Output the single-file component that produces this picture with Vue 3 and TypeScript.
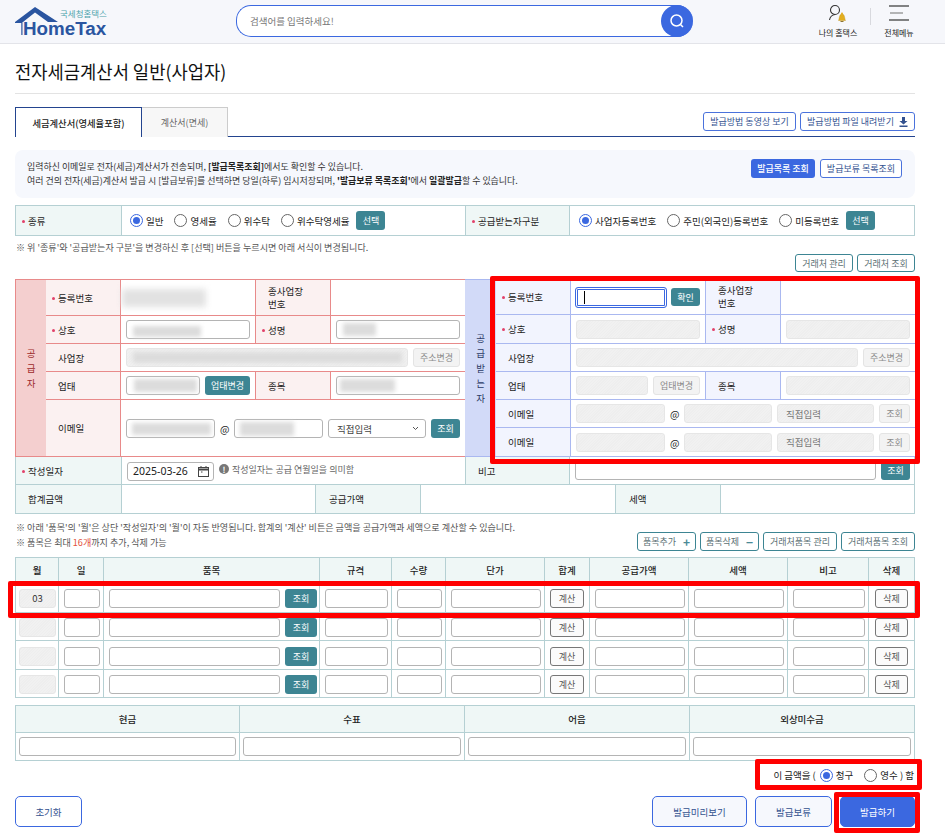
<script setup lang="ts">
const typeOpts = ['일반', '영세율', '위수탁', '위수탁영세율']
const recvOpts = ['사업자등록번호', '주민(외국인)등록번호', '미등록번호']
const itemHeads = ['월', '일', '품목', '규격', '수량', '단가', '합계', '공급가액', '세액', '비고', '삭제']
const itemRows = [
  { id: 1, month: '03', cls: 'h31' },
  { id: 2, month: '', cls: 'h28' },
  { id: 3, month: '', cls: 'h29' },
  { id: 4, month: '', cls: 'h28' },
]
const payHeads = ['현금', '수표', '어음', '외상미수금']
const supplierChars = ['공', '급', '자']
const receiverChars = ['공', '급', '받', '는', '자']
const emails = [1, 2]
</script>

<template>
  <div class="page">
    <header class="top">
      <svg class="logo" width="100" height="36" viewBox="0 0 100 36">
        <path d="M0 17 L20 2 L43 17 L33 17 L20 7.500 L8 17 L7.500 17 L7.500 30 L6.300 30 L6.300 18 L0 18 Z" fill="#2a55a0" />
        <text x="8" y="30" class="logo-main">HomeTax</text>
        <text x="45" y="12" class="logo-sub">국세청홈택스</text>
      </svg>
      <div class="search">
        <span class="search-ph">검색어를 입력하세요!</span>
        <span class="search-btn">
          <svg width="16" height="16" viewBox="0 0 16 16" fill="none" stroke="#fff" stroke-width="1.500">
            <circle cx="7.500" cy="7.500" r="5.500" />
            <path d="M11.500 11.500 L14 14" />
          </svg>
        </span>
      </div>
      <div class="top-actions">
        <div class="top-link">
          <svg width="20" height="18" viewBox="0 0 20 18" fill="none">
            <circle cx="7" cy="6" r="4.500" stroke="#333" stroke-width="1.100" />
            <path d="M1.500 16 C2 13 4 11 7 10.500" stroke="#333" stroke-width="1.100" />
            <path d="M10.500 16.500 C11.500 15 11 10 14 10 C17 10 16.500 15 17.500 16.500 Z" fill="#e3ae1e" stroke="#b98d18" stroke-width="0.400" />
            <circle cx="14" cy="9.500" r="1" fill="#e3ae1e" />
            <path d="M12.500 17.500 H15.500" stroke="#8a7436" />
          </svg>
          <span>나의 홈택스</span>
        </div>
        <i class="top-sep"></i>
        <div class="top-link menu">
          <svg width="20" height="18" viewBox="0 0 20 18" stroke-width="1.200">
            <path d="M0 2 H20" stroke="#333" />
            <path d="M1 9 H14" stroke="#888" />
            <path d="M0 16 H20" stroke="#333" />
          </svg>
          <span>전체메뉴</span>
        </div>
      </div>
    </header>

    <main class="main">
      <h1 class="title">전자세금계산서 일반(사업자)</h1>

      <div class="tabs">
        <div class="tab on">세금계산서(영세율포함)</div>
        <div class="tab">계산서(면세)</div>
        <div class="tab-tools">
          <button class="btn outline-blue w93">발급방법 동영상 보기</button>
          <button class="btn outline-blue w115">
            발급방법 파일 내려받기
            <svg width="9" height="10" viewBox="0 0 9 10" fill="#33518f"><path d="M3 0 H6 V4 H8.500 L4.500 7.500 L0.500 4 H3 Z M0.500 8.500 H8.500 V10 H0.500 Z" /></svg>
          </button>
        </div>
      </div>

      <section class="info">
        <div class="info-text">
          <p>입력하신 이메일로 전자(세금)계산서가 전송되며, <b>[발급목록조회]</b>에서도 확인할 수 있습니다.</p>
          <p>여러 건의 전자(세금)계산서 발급 시 [발급보류]를 선택하면 당일(하루) 임시저장되며, <b>'발급보류 목록조회'</b>에서 <b>일괄발급</b>할 수 있습니다.</p>
        </div>
        <button class="btn solid-blue w64">발급목록 조회</button>
        <button class="btn outline-blue w82">발급보류 목록조회</button>
      </section>

      <section class="type-row">
        <div class="g-label req w106">종류</div>
        <div class="type-cell left">
          <label v-for="(o, i) in typeOpts" :key="o" class="radio-item">
            <i class="radio" :class="{ on: i === 0 }"></i>{{ o }}
          </label>
          <button class="btn teal w29 sel">선택</button>
        </div>
        <div class="g-label req w105">공급받는자구분</div>
        <div class="type-cell right">
          <label v-for="(o, i) in recvOpts" :key="o" class="radio-item">
            <i class="radio" :class="{ on: i === 0 }"></i>{{ o }}
          </label>
          <button class="btn teal w29 sel">선택</button>
        </div>
      </section>

      <p class="note first">※ 위 '종류'와 '공급받는자 구분'을 변경하신 후 [선택] 버튼을 누르시면 아래 서식이 변경됩니다.</p>
      <div class="partner-tools">
        <button class="btn outline-teal w58">거래처 관리</button>
        <button class="btn outline-teal w58">거래처 조회</button>
      </div>

      <section class="parties">
        <div class="party sup">
          <div class="side"><span v-for="c in supplierChars" :key="c">{{ c }}</span></div>
          <div class="lb req">등록번호</div>
          <div class="cl flush"><i class="redact r-reg"></i></div>
          <div class="lb two">종사업장<br />번호</div>
          <div class="cl end"></div>

          <div class="lb req">상호</div>
          <div class="cl"><div class="field grow"><i class="redact r-corp"></i></div></div>
          <div class="lb req">성명</div>
          <div class="cl end"><div class="field grow"><i class="redact r-name"></i></div></div>

          <div class="lb">사업장</div>
          <div class="cl span3">
            <div class="field grow off"><i class="redact r-addr"></i></div>
            <button class="btn dis w47">주소변경</button>
          </div>

          <div class="lb">업태</div>
          <div class="cl">
            <div class="field grow"><i class="redact r-biz"></i></div>
            <button class="btn teal w45">업태변경</button>
          </div>
          <div class="lb">종목</div>
          <div class="cl end"><div class="field grow"><i class="redact r-item"></i></div></div>

          <div class="lb">이메일</div>
          <div class="cl span3 mail-s">
            <div class="field w89"><i class="redact r-mail"></i></div>
            <span class="at">@</span>
            <div class="field w89"><i class="redact r-domain"></i></div>
            <div class="field select w98">
              직접입력
              <svg width="7" height="5" viewBox="0 0 7 5" fill="none" stroke="#555"><path d="M1 1 L3.500 3.500 L6 1" /></svg>
            </div>
            <button class="btn teal w29 h19">조회</button>
          </div>
        </div>

        <div class="party rec">
          <div class="side"><span v-for="c in receiverChars" :key="c">{{ c }}</span></div>
          <div class="lb req">등록번호</div>
          <div class="cl"><div class="field focus w92"><i class="caret"></i></div><button class="btn teal w29 confirm">확인</button></div>
          <div class="lb two">종사업장<br />번호</div>
          <div class="cl end"></div>

          <div class="lb req">상호</div>
          <div class="cl"><div class="field grow off"></div></div>
          <div class="lb req">성명</div>
          <div class="cl end"><div class="field grow off"></div></div>

          <div class="lb">사업장</div>
          <div class="cl span3">
            <div class="field grow off"></div>
            <button class="btn dis w47">주소변경</button>
          </div>

          <div class="lb">업태</div>
          <div class="cl">
            <div class="field grow off"></div>
            <button class="btn dis w47">업태변경</button>
          </div>
          <div class="lb">종목</div>
          <div class="cl end"><div class="field grow off"></div></div>

          <template v-for="e in emails" :key="e">
            <div class="lb">이메일</div>
            <div class="cl span3">
              <div class="field off w89"></div>
              <span class="at">@</span>
              <div class="field off w88"></div>
              <div class="field off select w97">직접입력</div>
              <button class="btn dis w31">조회</button>
            </div>
          </template>
        </div>
      </section>

      <section class="date-row">
        <div class="g-label req w106">작성일자</div>
        <div class="date-cell">
          <div class="field date">
            2025-03-26
            <svg width="11" height="11" viewBox="0 0 11 11" fill="none" stroke="#444"><rect x="0.500" y="1.500" width="10" height="9" /><path d="M0 3.500 H11" stroke-width="2" /><path d="M3 0 V2 M8 0 V2" /><path d="M3 6 H4.500" /></svg>
          </div>
          <i class="info-dot">!</i>
          <span class="hint">작성일자는 공급 연월일을 의미함</span>
        </div>
        <div class="g-label w105">비고</div>
        <div class="memo-cell">
          <input class="input grow" />
          <button class="btn teal w29 h19">조회</button>
        </div>
      </section>

      <section class="sum-row">
        <div class="g-label w106">합계금액</div>
        <div class="sum-val a"></div>
        <div class="g-label b">공급가액</div>
        <div class="sum-val c"></div>
        <div class="g-label d">세액</div>
        <div class="sum-val e"></div>
      </section>

      <section class="item-notes">
        <div>
          <p class="note">※ 아래 '품목'의 '월'은 상단 '작성일자'의 '월'이 자동 반영됩니다. 합계의 '계산' 비튼은 금액을 공급가액과 세액으로 계산할 수 있습니다.</p>
          <p class="note">※ 품목은 최대 <em>16개</em>까지 추가, 삭제 가능</p>
        </div>
        <div class="item-tools">
          <button class="btn outline-teal w59">품목추가<span class="pm">+</span></button>
          <button class="btn outline-teal w59">품목삭제<span class="pm">−</span></button>
          <button class="btn outline-teal w74">거래처품목 관리</button>
          <button class="btn outline-teal w74">거래처품목 조회</button>
        </div>
      </section>

      <section class="items">
        <div v-for="h in itemHeads" :key="h" class="ih">{{ h }}</div>
        <template v-for="r in itemRows" :key="r.id">
          <div class="ic mo" :class="r.cls"><div class="field grow off month">{{ r.month }}</div></div>
          <div class="ic" :class="r.cls"><input class="input grow" /></div>
          <div class="ic gap5" :class="r.cls"><input class="input grow" /><button class="btn teal w32">조회</button></div>
          <div class="ic" :class="r.cls"><input class="input grow" /></div>
          <div class="ic" :class="r.cls"><input class="input grow" /></div>
          <div class="ic" :class="r.cls"><input class="input grow" /></div>
          <div class="ic center" :class="r.cls"><button class="btn gray w34">계산</button></div>
          <div class="ic" :class="r.cls"><input class="input grow" /></div>
          <div class="ic" :class="r.cls"><input class="input grow" /></div>
          <div class="ic" :class="r.cls"><input class="input grow" /></div>
          <div class="ic center" :class="r.cls"><button class="btn gray w33">삭제</button></div>
        </template>
      </section>

      <section class="pay">
        <div v-for="h in payHeads" :key="h" class="ph">{{ h }}</div>
        <div v-for="h in payHeads" :key="h + 'v'" class="pv"><input class="input grow" /></div>
      </section>

      <div class="receipt">
        이 금액을 (
        <label class="radio-item"><i class="radio on"></i>청구</label>
        <label class="radio-item"><i class="radio"></i>영수 ) 함</label>
      </div>

      <footer class="foot">
        <button class="fbtn w67">초기화</button>
        <span class="spacer"></span>
        <button class="fbtn soft w95">발급미리보기</button>
        <button class="fbtn soft w77">발급보류</button>
        <button class="fbtn primary w75">발급하기</button>
      </footer>
    </main>

    <i class="mark m1"></i>
    <i class="mark m2"></i>
    <i class="mark m3"></i>
    <i class="mark m4"></i>
  </div>
</template>

<style>
html, body { margin: 0; background: #fff; overflow: hidden; }
</style>

<style scoped>
* { box-sizing: border-box; }
.page {
  position: relative;
  width: 945px;
  height: 840px;
  overflow: hidden;
  font-family: "Noto Sans CJK KR", "Noto Sans", sans-serif;
  font-size: 9.5px;
  color: #222;
}
p { margin: 0; }
button { font-family: inherit; margin: 0; padding: 0; cursor: pointer; }

/* header */
.top {
  height: 44px;
  background: #f6f7fb;
  border-bottom: 1px solid #e3e4e9;
  display: flex;
  align-items: flex-start;
  position: relative;
}
.logo { margin: 5px 0 0 15px; flex: none; }
.logo-main { font-family: "Liberation Sans", sans-serif; font-weight: 700; font-size: 18.800px; fill: #2a55a0; }
.logo-sub { font-size: 8.500px; fill: #4ea4ad; }
.search {
  margin: 5px 0 0 121px;
  width: 457px;
  height: 32px;
  display: flex;
  align-items: center;
  justify-content: space-between;
  background: #fff;
  border: 1px solid #3b68e0;
  border-right: 0;
  border-radius: 15px 16px 16px 15px;
  padding-left: 13px;
  font-size: 9.500px;
  color: #777;
}
.search-btn {
  width: 32px;
  height: 32px;
  margin: -1px 0;
  border-radius: 50%;
  background: #3b68e0;
  display: flex;
  align-items: center;
  justify-content: center;
}
.top-actions { margin-left: auto; display: flex; align-items: flex-start; padding-right: 30px; }
.top-link { display: flex; flex-direction: column; align-items: center; font-size: 8px; line-height: 12px; width: 42px; color: #222; padding-top: 4px; }
.top-link svg { margin-bottom: 5px; }
.top-link.menu { width: 32px; margin-left: 12px; }
.top-sep { width: 1px; height: 17px; background: #d8d9de; margin: 8px 0 0 11px; }

.main { padding: 0 30px 0 15px; width: 945px; }
.title {
  margin: 0;
  padding-top: 13px;
  height: 50px;
  border-bottom: 1px solid #e3e3e3;
  font-size: 17.700px;
  font-weight: 400;
  line-height: 28px;
  color: #111;
}

/* tabs */
.tabs {
  margin-top: 13px;
  height: 30px;
  display: flex;
  border-bottom: 1px solid #23448f;
}
.tab {
  width: 86px;
  height: 30px;
  background: #f7f7f7;
  border: 1px solid #ccc;
  border-bottom: 0;
  border-left: 0;
  color: #666;
  font-size: 9px;
  display: flex;
  align-items: center;
  justify-content: center;
}
.tab.on {
  width: 127px;
  background: #fff;
  border: 1px solid #23448f;
  border-bottom: 0;
  color: #222;
  font-weight: 500;
  font-size: 9.300px;
}
.tab-tools { margin-left: auto; display: flex; gap: 4px; padding-top: 5px; }

/* buttons */
.btn {
  height: 19px;
  border-radius: 3px;
  font-size: 9px;
  line-height: 1;
  display: inline-flex;
  align-items: center;
  justify-content: center;
  white-space: nowrap;
  flex: none;
  border: 1px solid transparent;
  background: #fff;
}
.outline-blue { border-color: #4a72dc; color: #33518f; }
.solid-blue { background: #3b68e0; color: #fff; font-weight: 500; }
.outline-teal { border-color: #3d8593; color: #5b6f74; }
.teal { background: #3d8593; color: #fff; }
.dis { background: #f3f3f3; border-color: #e4e4e4; color: #8a8a8a; }
.gray { background: #fbfbfb; border-color: #777; color: #555; }
.h19 { height: 19px; }
.w93 { width: 93px; } .w115 { width: 115px; gap: 5px; }
.w64 { width: 64px; } .w82 { width: 82px; } .w29 { width: 29px; }
.w58 { width: 58px; } .w47 { width: 47px; } .w45 { width: 45px; }
.w31 { width: 31px; } .w59 { width: 59px; } .w74 { width: 74px; }
.w32 { width: 32px; } .w34 { width: 34px; } .w33 { width: 33px; }
.confirm { margin-left: -1px; height: 18px; }
.pm { margin-left: 7px; font-size: 12px; font-weight: 700; color: #4b8a96; }

/* info */
.info {
  margin-top: 13px;
  height: 48px;
  background: #f6f8fd;
  border-radius: 8px;
  display: flex;
  padding: 9px 13px 0 12px;
  gap: 5px;
  align-items: flex-start;
}
.info-text { flex: 1; line-height: 14px; color: #333; font-size: 8.950px; padding-top: 1px; }
.info-text b { font-weight: 700; color: #222; }

/* type row */
.type-row, .date-row, .sum-row {
  display: flex;
  border: 1px solid #b5d0d3;
  width: 900px;
}
.type-row { margin-top: 7px; height: 31px; }
.g-label {
  position: relative;
  display: flex;
  align-items: center;
  background: #eff7f6;
  padding-left: 12px;
  border-right: 1px solid #b5d0d3;
  flex: none;
  font-size: 9.500px;
}
.w106 { width: 106px; } .w105 { width: 105px; border-left: 1px solid #b5d0d3; }
.req::before {
  content: "";
  position: absolute;
  left: 6px;
  top: 50%;
  width: 3px;
  height: 3px;
  margin-top: -1px;
  border-radius: 50%;
  background: #e2416a;
}
.type-cell { display: flex; align-items: center; gap: 11px; }
.type-cell.left { width: 343px; padding-left: 8px; }
.type-cell.right { flex: 1; padding-left: 9px; gap: 11px; }
.sel { margin-left: -4px; }
.radio-item { display: inline-flex; align-items: center; gap: 3px; white-space: nowrap; }
.radio {
  width: 13px;
  height: 13px;
  border-radius: 50%;
  border: 1px solid #666;
  background: #fff;
  display: inline-flex;
  align-items: center;
  justify-content: center;
  flex: none;
}
.radio.on { border-color: #3b68e0; }
.radio.on::after { content: ""; width: 7px; height: 7px; border-radius: 50%; background: #3b68e0; }

.note { color: #555; font-size: 9.070px; line-height: 15px; padding-left: 1px; }
.note.first { margin-top: 4px; line-height: 14px; }
.note em { font-style: normal; color: #e2513c; }
.partner-tools { display: flex; justify-content: flex-end; gap: 4px; height: 18px; margin-bottom: 7px; }
.partner-tools .btn { height: 18px; }

/* party panels */
.parties { display: flex; width: 900px; height: 178px; }
.party { display: grid; width: 450px; height: 178px; border-top: 1px solid; }
.sup {
  grid-template-columns: 30px 75px 135px 75px 134px;
  grid-template-rows: 36px 28px 28px 28px 57px;
  border-color: #e88a8a;
  border-left: 1px solid #e88a8a;
  --line: #e88a8a;
  --lb: #fbf1f1;
}
.rec {
  grid-template-columns: 31px 75px 135px 75px 134px;
  grid-template-rows: 35px 29px 28px 28px 28px 29px;
  border-color: #aab8f0;
  --line: #aab8f0;
  --lb: #f2f4fe;
}
.side {
  grid-row: 1 / -1;
  display: flex;
  flex-direction: column;
  align-items: center;
  justify-content: center;
  line-height: 15px;
  font-size: 9.500px;
}
.sup .side { background: #f4cfcf; color: #9d2b2b; border-bottom: 1px solid var(--line); }
.rec .side { background: #d2daf8; color: #2c3a66; border-bottom: 1px solid var(--line); }
.lb, .cl { border-bottom: 1px solid var(--line); border-right: 1px solid var(--line); display: flex; align-items: center; }
.lb { background: var(--lb); padding-left: 12px; position: relative; font-size: 9.500px; }
.lb.two { line-height: 13px; }
.cl { padding: 0 5px; gap: 5px; }
.cl.end, .span3 { border-right: 0; }
.cl.flush { padding: 0; }
.span3 { grid-column: span 3; }
.mail-s { padding-top: 1px; }
.at { width: 9px; text-align: center; font-size: 10px; }

/* fields */
.field, .input {
  height: 19px;
  background: #fff;
  border: 1px solid #b4b4b4;
  border-radius: 3px;
  min-width: 0;
  padding: 0;
  position: relative;
  display: flex;
  align-items: center;
  flex: none;
  outline: none;
}
.grow { flex: 1; width: 0; }
.off {
  border-color: #e6e6e6;
  background: repeating-linear-gradient(135deg, #f1f1f1 0 1px, #eeeeee 1px 2px);
  color: #777;
}
.w89 { width: 89px; } .w88 { width: 88px; } .w98 { width: 98px; } .w97 { width: 97px; } .w92 { width: 92px; }
.focus { height: 21px; border: 1px solid #3b68e0; box-shadow: inset 0 0 0 1px #fff, inset 0 0 0 2px #3b68e0; border-radius: 3px; margin-left: -1px; }
.caret { width: 1px; height: 13px; background: #000; margin-left: 8px; }
.select { padding: 0 6px 0 8px; justify-content: space-between; color: #444; }
.rec .select { color: #777; }
.month { justify-content: center; color: #333; }

.redact { display: block; background: #dcdcdc; filter: blur(2px); flex: none; }
.r-reg { width: 84px; height: 18px; margin-left: 1px; background: #e2e2e2; filter: blur(3px); }
.r-corp { width: 68px; height: 11px; margin: 3px 0 0 6px; }
.r-name { width: 33px; height: 13px; margin-left: 6px; }
.r-addr { width: 269px; height: 11px; margin-left: 6px; }
.r-biz { width: 63px; height: 13px; margin-left: 7px; }
.r-item { width: 55px; height: 13px; margin-left: 3px; }
.r-mail { width: 79px; height: 12px; margin-left: 5px; }
.r-domain { width: 54px; height: 14px; margin-left: 5px; }

/* date / sum */
.date-row { height: 28px; border-top: 0; width: 900px; }
.date-cell { width: 343px; display: flex; align-items: center; padding-left: 5px; }
.date { width: 87px; padding: 0 4px 0 5px; justify-content: space-between; font-family: "Noto Sans", sans-serif; font-size: 10.500px; color: #222; margin-top: 1px; }
.info-dot {
  width: 10px; height: 10px; border-radius: 50%; background: #777; color: #fff; font-style: normal;
  font-size: 8px; font-weight: 700; display: flex; align-items: center; justify-content: center; margin-left: 5px; margin-top: -3px;
}
.hint { margin-left: 3px; color: #666; font-size: 9px; margin-top: -3px; }
.memo-cell { flex: 1; display: flex; align-items: center; gap: 5px; padding: 0 4px 0 5px; }
.sum-row { height: 29px; border-top: 0; }
.sum-val.a { width: 193px; }
.b { width: 106px; border-left: 1px solid #b5d0d3; padding-left: 13px; }
.sum-val.c { width: 194px; }
.d { width: 106px; border-left: 1px solid #b5d0d3; padding-left: 13px; }
.sum-val.e { flex: 1; }

/* items */
.item-notes { height: 43px; display: flex; justify-content: space-between; padding-top: 6px; }
.item-tools { display: flex; gap: 4px; padding-top: 12px; }
.items {
  display: grid;
  grid-template-columns: 43px 45px 216px 72px 54px 99px 45px 99px 99px 81px 46px;
  border: 1px solid #b5d0d3;
  border-right: 0;
  border-bottom: 0;
  width: 900px;
}
.ih {
  height: 24px;
  background: #eff7f6;
  display: flex;
  align-items: center;
  justify-content: center;
  border-right: 1px solid #b5d0d3;
  border-bottom: 1px solid #b5d0d3;
  font-weight: 500;
  font-size: 9.500px;
}
.ic {
  display: flex;
  align-items: center;
  padding: 2px 3px 0 5px;
  border-right: 1px solid #b5d0d3;
  border-bottom: 1px solid #b5d0d3;
}
.ic.mo { padding: 2px 2px 0 3px; }
.h31 { height: 31px; } .h28 { height: 28px; } .h29 { height: 29px; }
.gap5 { gap: 5px; padding-right: 2px; }
.center { justify-content: center; padding: 2px 0 0; }

/* pay */
.pay {
  margin-top: 7px;
  display: grid;
  grid-template-columns: 224px 225px 225px 225px;
  grid-template-rows: 27px 27px;
  border: 1px solid #b5d0d3;
  border-right: 0;
  width: 900px;
}
.ph {
  background: #eff7f6;
  display: flex;
  align-items: center;
  justify-content: center;
  border-right: 1px solid #b5d0d3;
  border-bottom: 1px solid #b5d0d3;
  font-weight: 500;
}
.pv { display: flex; align-items: center; padding: 0 3px; border-right: 1px solid #b5d0d3; }

.receipt {
  height: 28px;
  display: flex;
  align-items: center;
  justify-content: flex-end;
  gap: 4px;
  padding-right: 1px;
}
.receipt .radio-item + .radio-item { margin-left: 7px; }
.foot { margin-top: 7px; display: flex; gap: 8px; }
.spacer { flex: 1; }
.fbtn {
  height: 31px;
  border-radius: 5px;
  border: 1px solid #3b68e0;
  background: #fff;
  color: #33518f;
  font-size: 9.500px;
}
.fbtn.soft { background: #f6f8fd; }
.fbtn.primary { background: #3b68e0; color: #fff; }
.w67 { width: 67px; } .w95 { width: 95px; } .w77 { width: 77px; } .w75 { width: 75px; }

/* red annotation frames laid over the form */
.mark { position: absolute; border: 5px solid #f00; border-radius: 2px; pointer-events: none; }
.m1 { left: 490px; top: 276px; width: 430px; height: 188px; }
.m2 { left: 8px; top: 581px; width: 912px; height: 37px; }
.m3 { left: 755px; top: 759px; width: 167px; height: 31px; }
.m4 { left: 834px; top: 792px; width: 86px; height: 41px; }
</style>
